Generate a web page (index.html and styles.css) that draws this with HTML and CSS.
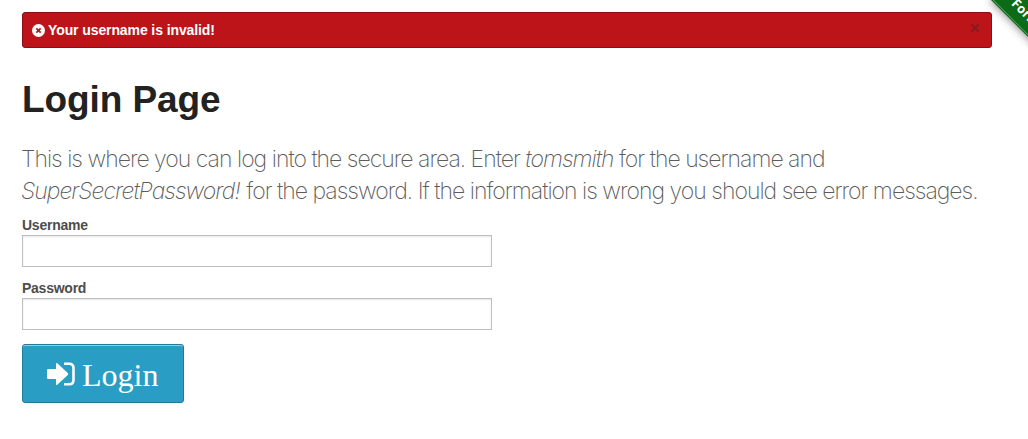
FILE: index.html
```html
<!DOCTYPE html>
<html lang="en">
<head>
<meta charset="utf-8">
<title>Login Page</title>
<link rel="stylesheet" href="styles.css">
</head>
<body>
<div class="fork-corner"><a class="fork-ribbon">Fork</a></div>
<div class="page">
  <div class="flash">
    <svg class="flash-icon" viewBox="0 0 12 12"><circle cx="6" cy="6" r="6"/><path d="M4 4l4 4M8 4l-4 4"/></svg>
    <span class="flash-text">Your username is invalid!</span>
    <svg class="flash-close" viewBox="0 0 10 10"><path d="M1.3 1.3l7.4 7.4M8.7 1.3L1.3 8.7"/></svg>
  </div>
  <h2 class="title">Login Page</h2>
  <h4 class="subheader">This is where you can log into the secure area. Enter <em>tomsmith</em> for the username and<br><em class="secret">SuperSecretPassword!</em> for the password. If the information is wrong you should see error messages.</h4>
  <form class="form">
    <label class="label" for="username">Username</label>
    <input class="field" id="username" type="text">
    <label class="label" for="password">Password</label>
    <input class="field" id="password" type="password">
    <button class="login" type="button">
      <svg class="login-icon" viewBox="0 0 28 24"><path class="arrow" d="M0 8.2Q0 7 1.2 7H9V1.8Q9 .3 10.3 1.3L20.8 11Q21.7 12 20.8 13L10.3 22.7Q9 23.7 9 22.2V17H1.2Q0 17 0 15.8Z"/><path class="door" d="M17 1.7h5.2q4.3 0 4.3 4.3v12q0 4.3-4.3 4.3H17"/></svg>
      <span class="login-text">Login</span>
    </button>
  </form>
</div>
</body>
</html>
```
FILE: styles.css
```css
* { box-sizing: border-box; }
body { margin: 0; background: #fff; color: #222; font-family: "Liberation Sans", Arial, sans-serif; overflow: hidden; }
.page { padding: 12px 36px 0 22px; }
.flash { display: flex; align-items: center; height: 36px; padding: 0 11px 0 10px; border: 1px solid #861014; border-radius: 3px; background: #bd1419; color: #fff; }
.flash-icon { width: 13px; height: 13px; margin: 0 3px 0 -1px; fill: #fff; stroke: #bd1419; stroke-width: 1.6; }
.flash-icon circle { stroke: none; }
.flash-text { flex: 1; font-size: 14px; font-weight: bold; line-height: 14px; letter-spacing: -.1px; }
.flash-close { width: 10px; height: 10px; margin-top: -4px; stroke: #861c20; stroke-width: 2; }
.title { margin: 26px 0 0; font-size: 37px; line-height: 52px; font-weight: bold; letter-spacing: -.08px; }
.subheader { margin: 17px 0 0 -1px; color: #5c5c5c; font: 200 23px/32px Inter, "Liberation Sans", sans-serif; letter-spacing: -.99px; white-space: nowrap; }
.secret { margin-right: 1px; }
.form { display: flex; flex-direction: column; align-items: flex-start; margin-top: 8px; }
.label { color: #4d4d4d; font-size: 14px; font-weight: bold; line-height: 20px; letter-spacing: -.25px; }
.field { width: 470px; height: 32px; margin: 0 0 11px; padding: 8px; border: 1px solid #bfbfbf; border-radius: 0; background: #fff; box-shadow: inset 0 1px 2px rgba(0,0,0,.1); }
.login { display: flex; align-items: center; width: 162px; height: 59px; margin-top: 3px; padding: 0 0 0 24px; border: 1px solid #1f7b99; border-radius: 3px; background: #2a9dc4; box-shadow: inset 0 1px 0 rgba(255,255,255,.5); color: #fff; }
.login-icon { width: 28px; height: 24px; margin-right: 7px; }
.arrow { fill: #fff; }
.door { fill: none; stroke: #fff; stroke-width: 2.6; }
.login-text { padding-top: 2px; font: 32px/40px "Liberation Serif", "Times New Roman", serif; }
.fork-corner { position: absolute; top: 0; right: 0; width: 60px; height: 60px; overflow: hidden; }
.fork-ribbon { position: absolute; left: 23px; top: 0; width: 210px; height: 30px; padding-left: 17px; background: #0b6b16; color: #fff; font: 700 13px/28px "Open Sans", sans-serif; transform-origin: 0 100%; transform: translateY(-30px) rotate(45deg); box-shadow: 0 1px 8px rgba(0,0,0,.45), inset 0 -1px 0 #0b6b16, inset 0 -2px 0 #5b9c61; white-space: nowrap; }
```
